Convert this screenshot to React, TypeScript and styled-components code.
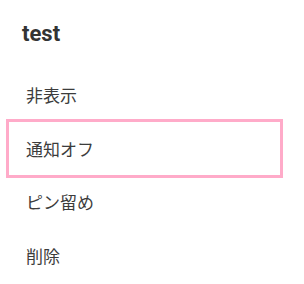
import styled, { createGlobalStyle } from 'styled-components';

let Global = createGlobalStyle`
  html, body {
    margin: 0;
    padding: 0;
    background: #ffffff;
  }
`;

let Sheet = styled.div`
  width: 304px;
  height: 284px;
  background: #ffffff;
  display: flex;
  flex-direction: column;
  overflow: hidden;
`;

let Title = styled.h2`
  margin: 0;
  padding: 20px 22px 0;
  font-family: Roboto, 'Noto Sans', sans-serif;
  font-weight: 700;
  font-size: 22px;
  line-height: 28px;
  color: #333333;
`;

let Menu = styled.ul`
  list-style: none;
  margin: 20px 0 0;
  padding: 0 24px 0 9px;
  display: flex;
  flex-direction: column;
`;

let Item = styled.li<{ $focused?: boolean }>`
  height: 53.5px;
  display: flex;
  align-items: center;
  padding-left: 17px;
  font-family: 'Noto Sans CJK JP', 'Noto Sans', sans-serif;
  font-size: 17px;
  color: #3c3c3c;
  outline: ${(p) => (p.$focused ? '3px solid #ffabc9' : 'none')};
`;

let items = ['非表示', '通知オフ', 'ピン留め', '削除'];

export default function App() {
  return (
    <Sheet>
      <Global />
      <Title>test</Title>
      <Menu>
        {items.map((label, i) => (
          <Item key={label} $focused={i === 1}>
            {label}
          </Item>
        ))}
      </Menu>
    </Sheet>
  );
}
